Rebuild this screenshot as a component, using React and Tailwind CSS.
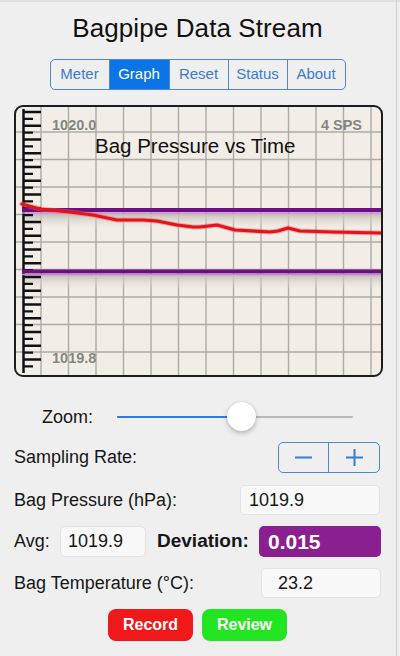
import React from "react";

const redPts = [
  [22, 204], [40, 209], [70, 212], [93, 215], [117, 220], [143, 220], [157, 221],
  [177, 225], [193, 227], [200, 227], [217, 225], [235, 230], [270, 232], [278, 231],
  [288, 228], [300, 231], [333, 232], [381, 233],
];

function Chart() {
  const W = 365;
  const H = 268;
  const vlines = [];
  for (let k = 0; k <= 12; k++) vlines.push(25 + 27.5 * k);
  const hlines = [];
  for (let k = 0; k <= 8; k++) hlines.push(25 + 27.5 * k);
  const ticks = [];
  for (let i = 0; i < 38; i++) ticks.push({ y: 5 + 6.875 * i, long: i % 2 === 0 });
  const pts = redPts.map(([x, y]) => `${x - 16},${y - 107}`).join(" ");
  return (
    <div className="relative w-[369px] h-[272px] border-2 border-[#1d1d1d] rounded-[9px] bg-[#f2eee7] overflow-hidden">
      <svg width={W} height={H} viewBox={`0 0 ${W} ${H}`} className="absolute left-0 top-0">
        <defs>
          <linearGradient id="shade" x1="0" y1="0" x2="0" y2="1">
            <stop offset="0" stopColor="#c4bfb9" stopOpacity="1" />
            <stop offset="1" stopColor="#e9e5de" stopOpacity="0" />
          </linearGradient>
        </defs>
        {vlines.map((x) => (
          <line key={"v" + x} x1={x} y1={0} x2={x} y2={H} stroke="#aeaaa4" strokeWidth="1.4" />
        ))}
        {hlines.map((y) => (
          <line key={"h" + y} x1={0} y1={y} x2={W} y2={y} stroke="#aeaaa4" strokeWidth="1.4" />
        ))}
        <rect x="6" y="107" width={W - 6} height="15" fill="url(#shade)" />
        <rect x="6" y="168" width={W - 6} height="15" fill="url(#shade)" />
        <line x1="7.5" y1="2" x2="7.5" y2="266" stroke="#111" strokeWidth="2.5" />
        {ticks.map((t, i) => (
          <line key={"t" + i} x1="7.5" y1={t.y} x2={t.long ? 25 : 17} y2={t.y} stroke="#111" strokeWidth="2.3" />
        ))}
        <line x1="6" y1="103" x2={W} y2="103" stroke="#6c0f80" strokeWidth="4" />
        <line x1="6" y1="106" x2={W} y2="106" stroke="#c685cf" strokeWidth="1.5" />
        <line x1="6" y1="164.5" x2={W} y2="164.5" stroke="#6c0f80" strokeWidth="4" />
        <line x1="6" y1="167.5" x2={W} y2="167.5" stroke="#c685cf" strokeWidth="1.5" />
        <polyline points={pts} fill="none" stroke="#f25a5a" strokeWidth="5" strokeLinejoin="round" strokeLinecap="round" opacity="0.45" />
        <polyline points={pts} fill="none" stroke="#e3121b" strokeWidth="3.2" strokeLinejoin="round" strokeLinecap="round" />
      </svg>
      <div className="absolute left-[36px] top-[9px] text-[14.5px] font-bold text-[#858585] leading-[18px]">1020.0</div>
      <div className="absolute right-[19px] top-[9px] text-[14.5px] font-bold text-[#858585] leading-[18px]">4 SPS</div>
      <div className="absolute left-[79px] top-[27px] text-[20.5px] text-[#111] leading-[24px]">Bag Pressure vs Time</div>
      <div className="absolute left-[36px] top-[242px] text-[14.5px] font-bold text-[#858585] leading-[18px]">1019.8</div>
    </div>
  );
}

function Seg() {
  const items = [
    ["Meter", 58],
    ["Graph", 60],
    ["Reset", 59],
    ["Status", 59],
    ["About", 58],
  ];
  return (
    <div className="flex h-[31px] border-[1.5px] border-[#4f86d2] rounded-[5px] overflow-hidden">
      {items.map(([t, w], i) => (
        <div
          key={t}
          style={{ width: w }}
          className={
            (i > 0 ? "border-l-[1.5px] border-[#4f86d2] " : "") +
            (t === "Graph"
              ? "bg-[#0b74e6] text-white "
              : "text-[#3c7bcc] ") +
            "flex items-center justify-center text-[15px]"
          }
        >
          {t}
        </div>
      ))}
    </div>
  );
}

export default function App() {
  return (
    <div className="relative w-[400px] h-[656px] bg-[#efefef] overflow-hidden text-[#161616] font-['Liberation_Sans','Helvetica','Arial',sans-serif]">
      <div className="absolute left-0 top-0 w-[400px] h-[2px] bg-[#dde1e4]" />
      <div className="absolute left-[396px] top-0 w-[1px] h-[656px] bg-[#cfcfcf]" />
      <div className="w-[395px] flex flex-col items-center">
        <div className="h-[56px] flex items-center justify-center text-[26px] tracking-[0.1px] text-[#111]">
          Bagpipe Data Stream
        </div>
        <div className="mt-[3px]">
          <Seg />
        </div>
      </div>

      <div className="ml-[14px] mt-[15px] w-[369px]">
        <Chart />
      </div>

      <div className="ml-[14px] w-[368px] flex flex-col">
        <div className="mt-[25px] h-[30px] flex items-center">
          <div className="ml-[28px] w-[55px] text-[18px]">Zoom:</div>
          <div className="relative ml-[20px] w-[236px] h-[2px] bg-[#b8b8b8] rounded">
            <div className="absolute left-0 top-0 h-[2px] w-[124px] bg-[#2f7be2] rounded" />
            <div className="absolute left-[110px] top-[-14px] w-[29px] h-[29px] rounded-full bg-white shadow-[0_2px_5px_rgba(0,0,0,0.25),0_0_1px_rgba(0,0,0,0.2)]" />
          </div>
        </div>

        <div className="mt-[10px] h-[30px] flex items-center">
          <div className="text-[18px]">Sampling Rate:</div>
          <div className="ml-auto mr-[2px] w-[102px] h-[31px] border-[1.5px] border-[#4f86d2] rounded-[5px] flex">
            <div className="w-[50px] h-full flex items-center justify-center border-r-[1.5px] border-[#4f86d2]">
              <svg width="19" height="19" viewBox="0 0 19 19">
                <line x1="1" y1="9.5" x2="18" y2="9.5" stroke="#3c7bcc" strokeWidth="2" />
              </svg>
            </div>
            <div className="flex-1 h-full flex items-center justify-center">
              <svg width="19" height="19" viewBox="0 0 19 19">
                <line x1="1" y1="9.5" x2="18" y2="9.5" stroke="#3c7bcc" strokeWidth="2" />
                <line x1="9.5" y1="1" x2="9.5" y2="18" stroke="#3c7bcc" strokeWidth="2" />
              </svg>
            </div>
          </div>
        </div>

        <div className="mt-[13px] h-[30px] flex items-center">
          <div className="text-[18px]">Bag Pressure (hPa):</div>
          <div className="ml-auto mr-[2px] w-[140px] h-[30px] bg-[#f8f8f8] border border-[#e2e2e2] rounded-[5px] flex items-center pl-[8px] text-[18px]">
            1019.9
          </div>
        </div>

        <div className="mt-[11px] h-[31px] flex items-center">
          <div className="text-[18px] w-[46px]">Avg:</div>
          <div className="w-[86px] h-[31px] bg-[#f8f8f8] border border-[#e2e2e2] rounded-[5px] flex items-center pl-[7px] text-[18px]">
            1019.9
          </div>
          <div className="ml-[11px] text-[19px] font-bold">Deviation:</div>
          <div className="ml-auto mr-[1px] w-[122px] h-[31px] bg-[#8a1f90] rounded-[5px] flex items-center pl-[9px] text-[21px] font-bold text-white">
            0.015
          </div>
        </div>

        <div className="mt-[11px] h-[30px] flex items-center">
          <div className="text-[18px]">Bag Temperature (°C):</div>
          <div className="ml-auto mr-[1px] w-[120px] h-[30px] bg-[#f8f8f8] border border-[#e2e2e2] rounded-[5px] flex items-center pl-[16px] text-[18px]">
            23.2
          </div>
        </div>
      </div>

      <div className="w-[395px] mt-[11px] flex justify-center gap-[9px]">
        <div className="w-[85px] h-[32px] rounded-[8px] bg-[#f01818] text-white font-bold text-[16px] flex items-center justify-center">
          Record
        </div>
        <div className="w-[85px] h-[32px] rounded-[8px] bg-[#22e522] text-white font-bold text-[16px] flex items-center justify-center">
          Review
        </div>
      </div>
    </div>
  );
}
